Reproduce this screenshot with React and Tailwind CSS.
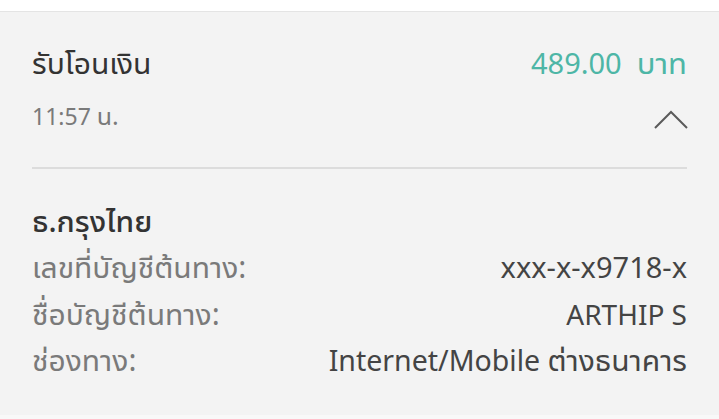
export default function App() {
  return (
    <div className="w-[719px] h-[419px] bg-white overflow-hidden font-['Noto_Sans','Noto_Sans_Thai_UI',sans-serif]">
      <div className="h-[11px] bg-white" />
      <div className="h-[404px] bg-[#f3f3f3] border-t border-[#e4e4e4] px-8">
        <div className="flex justify-between items-baseline pt-[32px]">
          <div className="text-[30px] leading-[36px] text-[#333]">รับโอนเงิน</div>
          <div className="text-[29px] leading-[36px] text-[#4db6a6]">
            489.00&nbsp; <span className="text-[31px]">บาท</span>
          </div>
        </div>
        <div className="flex justify-between items-start mt-[19px]">
          <div className="text-[23px] leading-[30px] text-[#7a7a7a]">
            11:57 <span className="text-[25px]">น.</span>
          </div>
          <svg width="34" height="20" viewBox="0 0 34 20" className="mt-[10px] mr-[-1px]">
            <path d="M1 18 L17 2 L33 18" fill="none" stroke="#5a5a5a" strokeWidth="2" />
          </svg>
        </div>
        <div className="h-[2px] bg-[#dcdcdc] mt-[36px]" />
        <div className="pt-[34px]">
          <div className="text-[30px] leading-[36px] text-[#333] font-medium">ธ.กรุงไทย</div>
          <div className="mt-[5px] text-[28px] leading-[46.5px]">
            <div className="flex justify-between items-baseline">
              <span className="text-[30px] text-[#7a7a7a]">เลขที่บัญชีต้นทาง:</span>
              <span className="text-[29px] text-[#444]">xxx-x-x9718-x</span>
            </div>
            <div className="flex justify-between items-baseline">
              <span className="text-[30px] text-[#7a7a7a]">ชื่อบัญชีต้นทาง:</span>
              <span className="text-[#444]">ARTHIP S</span>
            </div>
            <div className="flex justify-between items-baseline">
              <span className="text-[30px] text-[#7a7a7a]">ช่องทาง:</span>
              <span className="text-[28.5px] text-[#444]">
                Internet/Mobile <span className="text-[30px]">ต่างธนาคาร</span>
              </span>
            </div>
          </div>
        </div>
      </div>
      <div className="h-[4px] bg-[#f8f8f8]" />
    </div>
  );
}
